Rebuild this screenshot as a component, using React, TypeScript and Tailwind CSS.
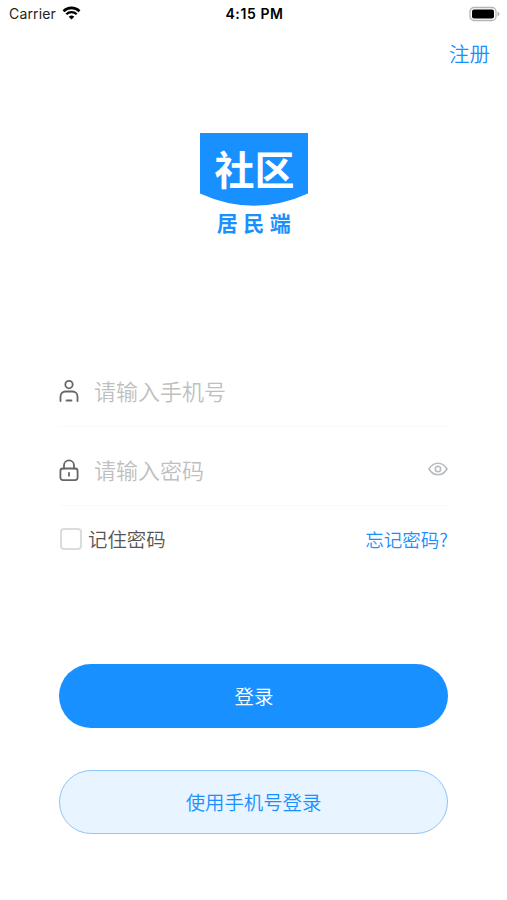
import { useState } from "react";

function StatusBar() {
  return (
    <div className="grid h-7 grid-cols-3 items-center pr-[7px] pl-[9px] font-['Inter','Liberation_Sans',sans-serif] text-black">
      <div className="flex items-center gap-1.5">
        <span className="text-[14px] leading-5 font-normal tracking-[0.15px] text-[#222]">Carrier</span>

        <svg className="mb-0.5" width="19" height="14" viewBox="0 0 18 14" fill="none">
          <path d="M1 5.2a11.4 11.4 0 0 1 16 0" stroke="#000" strokeWidth="2.6" />
          <path d="M3.8 8.3a7.4 7.4 0 0 1 10.4 0" stroke="#000" strokeWidth="2.3" />
          <path d="M9 13.6 6.2 10.8a4 4 0 0 1 5.6 0z" fill="#000" />
        </svg>
      </div>

      <span className="text-center text-[14px] leading-5 font-semibold tracking-[0.6px]">4:15 PM</span>

      <svg className="mb-px justify-self-end" width="31" height="16" viewBox="0 0 31 16">
        <rect x="1" y="1.5" width="26" height="13" rx="4" fill="#fff" stroke="#b5b5b5" strokeWidth="1.3" />
        <rect x="3" y="3.5" width="22" height="9" rx="2" fill="#000" />
        <path d="M28.5 5.8c1.6.5 2 1.4 2 2.2s-.4 1.7-2 2.2z" fill="#b5b5b5" />
      </svg>
    </div>
  );
}

function Logo() {
  return (
    <div className="flex flex-col items-center text-[#1890ff]">
      <svg width="108" height="74" viewBox="0 0 108 74">
        <path d="M0 0h108v60.5Q54 85 0 60.5z" fill="#1890ff" />
        <text
          x="54.5"
          y="52"
          textAnchor="middle"
          fill="#fff"
          fontSize="40"
          fontWeight="700"
          fontFamily="'Noto Sans CJK SC', sans-serif"
        >
          社区
        </text>
      </svg>

      <span className="mt-px pl-1.5 text-[21px] leading-7 font-bold tracking-[5.5px]">居民端</span>
    </div>
  );
}

function UserIcon() {
  return (
    <svg width="20" height="24" viewBox="0 0 20 24" fill="none" stroke="#666" strokeWidth="1.8" strokeLinecap="round">
      <circle cx="10" cy="5.6" r="3.7" />
      <path d="M1.5 22v-4.5a5 5 0 0 1 5-5h7a5 5 0 0 1 5 5V22" />
      <path d="M7.5 21.5h5" />
    </svg>
  );
}

function LockIcon() {
  return (
    <svg width="20" height="24" viewBox="0 0 20 24" fill="none" stroke="#666" strokeWidth="1.8" strokeLinecap="round">
      <rect x="1.4" y="10.5" width="17.2" height="11.6" rx="2.5" />
      <path d="M5 10.5V7.3a5 5 0 0 1 10 0v3.2" />
      <path d="M10 14.8v3" />
    </svg>
  );
}

function EyeIcon() {
  return (
    <svg width="20" height="14" viewBox="0 0 20 14" fill="none" stroke="#b8bcc0" strokeWidth="1.6">
      <path d="M1 7c2.3-3.8 5.2-5.8 9-5.8S16.7 3.2 19 7c-2.3 3.8-5.2 5.8-9 5.8S3.3 10.8 1 7z" />
      <circle cx="10" cy="7" r="2.7" />
    </svg>
  );
}

export default function App() {
  const [phone, setPhone] = useState("");
  const [password, setPassword] = useState("");
  const [showPassword, setShowPassword] = useState(false);
  const [remember, setRemember] = useState(false);

  return (
    <div className="h-[900px] w-[507px] overflow-hidden bg-white font-['Noto_Sans_CJK_SC',sans-serif] font-[350]">
      <StatusBar />

      <div className="flex h-[50px] items-center justify-end pr-[17px]">
        <button className="text-[20.5px] leading-7 text-[#1890ff]">注册</button>
      </div>

      <div className="mt-[55px]">
        <Logo />
      </div>

      <form className="mt-[120px] px-[59px]" onSubmit={(e) => e.preventDefault()}>
        <div className="flex h-[71px] items-center border-b border-[#f9f9f9]">
          <UserIcon />
          <input
            className="mb-[3px] ml-[15px] min-w-0 flex-1 text-[22px] leading-8 text-[#333] outline-none placeholder:text-[#bfbfbf]"
            placeholder="请输入手机号"
            value={phone}
            onChange={(e) => setPhone(e.target.value)}
          />
        </div>

        <div className="mt-2 flex h-[71px] items-center border-b border-[#f9f9f9]">
          <LockIcon />
          <input
            type={showPassword ? "text" : "password"}
            className="mb-[3px] ml-[15px] min-w-0 flex-1 text-[22px] leading-8 text-[#333] outline-none placeholder:text-[#bfbfbf]"
            placeholder="请输入密码"
            value={password}
            onChange={(e) => setPassword(e.target.value)}
          />
          <button type="button" className="pb-0.5" onClick={() => setShowPassword(!showPassword)}>
            <EyeIcon />
          </button>
        </div>

        <div className="mt-[19px] flex h-7 items-center justify-between">
          <label className="flex items-center gap-1.5 pl-px text-[19.4px] leading-7 text-[#555]">
            <input
              type="checkbox"
              className="size-[22px] appearance-none rounded-[4px] border-2 border-[#dcdcdc] checked:border-[#1890ff] checked:bg-[#1890ff]"
              checked={remember}
              onChange={(e) => setRemember(e.target.checked)}
            />
            记住密码
          </label>

          <a className="text-[18.5px] leading-7 text-[#1890ff]">忘记密码?</a>
        </div>

        <button className="mt-[111px] block h-16 w-full rounded-full bg-[#1890ff] pl-px text-[19.4px] text-white">
          登录
        </button>

        <button
          type="button"
          className="mt-[42px] block h-16 w-full rounded-full border border-[#8ec5fa] bg-[#e8f4ff] text-[19.4px] text-[#1890ff]"
        >
          使用手机号登录
        </button>
      </form>
    </div>
  );
}
